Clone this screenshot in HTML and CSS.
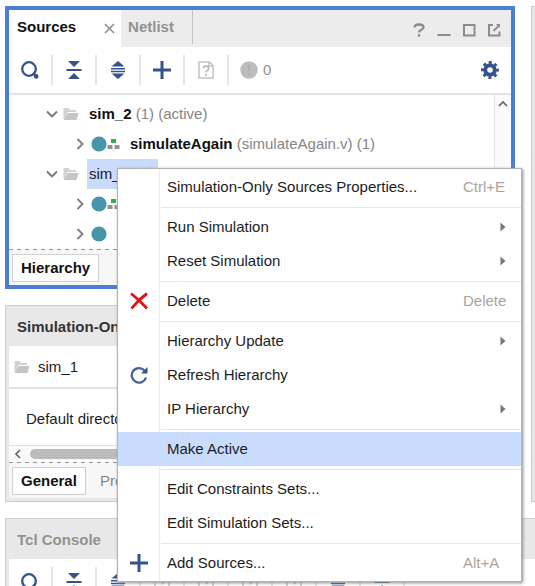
FILE: index.html
```html
<!DOCTYPE html>
<html lang="en">
<head>
<meta charset="utf-8">
<title>Sources</title>
<link rel="stylesheet" href="styles.css">
</head>
<body>
<svg class="defs" aria-hidden="true">
  <symbol id="search" viewBox="0 0 18 18"><circle cx="8" cy="8" r="6.8" fill="none" stroke="#34528c" stroke-width="2.3"/><path d="M12 12l3 3" stroke="#34528c" stroke-width="2.6"/><circle cx="15.2" cy="15.4" r="2.3" fill="#34528c"/></symbol>
  <symbol id="collapse" viewBox="0 0 18 18"><path d="M3 0h12l-6 6zM3 18h12l-6-6zM1.500 8h15v2h-15z" fill="#34528c"/></symbol>
  <symbol id="expand" viewBox="0 0 18 18"><path d="M2.500 5.500L9 0l6.500 5.500zM2.500 12.500L9 18l6.500-5.500zM2 7h14v1.500H2zM2 9.800h14v1.500H2z" fill="#34528c"/></symbol>
  <symbol id="plus" viewBox="0 0 18 18"><path d="M9 0v18M0 9h18" stroke="#34528c" stroke-width="3"/></symbol>
  <symbol id="doc" viewBox="0 0 18 18"><path d="M2 1h10.500L16 4.500V17H2zM12 1v4h4" fill="none" stroke="#c2c2c2" stroke-width="1.500"/><path d="M6.300 7.500q0-2.300 2.700-2.300t2.700 2.200q0 1.300-1.500 2Q9 10 9 11.600M9 13v2" fill="none" stroke="#b5b5b5" stroke-width="1.700"/></symbol>
  <symbol id="alert" viewBox="0 0 18 18"><circle cx="9" cy="9" r="8.700" fill="#bcbcbc"/><path d="M9 4v6M9 12v2" stroke="#b0b0b0" stroke-width="2"/></symbol>
  <symbol id="gear" viewBox="0 0 18 18"><circle cx="9" cy="9" r="4.800" fill="none" stroke="#34528c" stroke-width="4"/><circle cx="9" cy="9" r="7.500" fill="none" stroke="#34528c" stroke-width="2.800" stroke-dasharray="3 2.890" stroke-dashoffset="1.500"/></symbol>
  <symbol id="folder" viewBox="0 0 16 14"><path d="M0.500 12V1h5l1.500 2h6v2H4.500L1.500 12z" fill="#d2d2d2"/><path d="M4.500 6H15.500L13.500 13H0.800z" fill="#c5c5c5"/></symbol>
  <symbol id="down" viewBox="0 0 12 12"><path d="M1 3.500l5 5 5-5" fill="none" stroke="#777" stroke-width="1.900"/></symbol>
  <symbol id="right" viewBox="0 0 12 12"><path d="M3.500 1l5 5-5 5" fill="none" stroke="#808080" stroke-width="1.900"/></symbol>
  <symbol id="module" viewBox="0 0 30 16"><circle cx="8" cy="8" r="7.600" fill="#4795ab"/><path d="M20 3h5v4h-5z" fill="#35ad54"/><path d="M16.500 9h5v4h-5zM23.500 9h5v4h-5z" fill="#929292"/></symbol>
  <symbol id="circle" viewBox="0 0 30 16"><circle cx="8" cy="8" r="7.600" fill="#4795ab"/></symbol>
  <symbol id="sub" viewBox="0 0 6 10"><path d="M0.500 0.500L5.500 5l-5 4.500z" fill="#777"/></symbol>
</svg>

<main class="page">
  <section class="panel sources">
    <header class="tabs">
      <button class="tab active">Sources</button>
      <button class="close" aria-label="Close"><svg width="11" height="11" viewBox="0 0 11 11"><path d="M1 1l9 9M10 1l-9 9" stroke="#8c8c8c" stroke-width="1.500"/></svg></button>
      <button class="tab netlist">Netlist</button>
      <div class="window">
        <button aria-label="Help"><svg width="14" height="14" viewBox="0 0 14 14"><path d="M2.500 4.500Q2.500 1.500 7 1.500t4.500 2.700q0 1.600-2.500 2.800Q7 8 7 9.500M7 11.300v2.400" fill="none" stroke="#8c8c8c" stroke-width="2.300"/></svg></button>
        <button aria-label="Minimize"><svg width="14" height="14" viewBox="0 0 14 14"><path d="M0.500 12h13" stroke="#8c8c8c" stroke-width="2"/></svg></button>
        <button aria-label="Maximize"><svg width="14" height="14" viewBox="0 0 14 14"><path d="M2 2h10.500v10.500H2z" fill="none" stroke="#8c8c8c" stroke-width="2"/></svg></button>
        <button aria-label="Float"><svg width="14" height="14" viewBox="0 0 14 14"><path d="M6 2H2v10.500h10.500V8.500" fill="none" stroke="#8c8c8c" stroke-width="2"/><path d="M9 1h4v4z" fill="#8c8c8c"/><path d="M6.500 8l5-5" stroke="#8c8c8c" stroke-width="1.800"/></svg></button>
      </div>
    </header>
    <div class="toolbar">
      <button aria-label="Search"><svg><use href="#search"/></svg></button>
      <button aria-label="Collapse all"><svg><use href="#collapse"/></svg></button>
      <button aria-label="Expand all"><svg><use href="#expand"/></svg></button>
      <button aria-label="Add"><svg><use href="#plus"/></svg></button>
      <button aria-label="File help"><svg><use href="#doc"/></svg></button>
      <button class="count" aria-label="Messages"><svg><use href="#alert"/></svg>0</button>
      <button class="settings" aria-label="Settings"><svg><use href="#gear"/></svg></button>
    </div>
    <div class="body">
      <ul class="tree">
        <li><svg class="arrow"><use href="#down"/></svg><svg class="folder"><use href="#folder"/></svg><span><b>sim_2</b> (1) (active)</span></li>
        <li class="child"><svg class="arrow"><use href="#right"/></svg><svg class="module"><use href="#module"/></svg><span><b>simulateAgain</b> (simulateAgain.v) (1)</span></li>
        <li><svg class="arrow"><use href="#down"/></svg><svg class="folder"><use href="#folder"/></svg><span class="selected">sim_1</span></li>
        <li class="child"><svg class="arrow"><use href="#right"/></svg><svg class="module"><use href="#module"/></svg></li>
        <li class="child"><svg class="arrow"><use href="#right"/></svg><svg class="module"><use href="#circle"/></svg></li>
      </ul>
      <div class="vscroll"><svg width="10" height="6" viewBox="0 0 10 6"><path d="M1 5l4-4 4 4" fill="none" stroke="#666" stroke-width="1.700"/></svg></div>
    </div>
    <footer class="views"><button class="view on">Hierarchy</button></footer>
  </section>

  <section class="panel side" aria-label="Editor"></section>

  <section class="panel grey props">
    <h2 class="title">Simulation-Only</h2>
    <div class="object"><svg class="folder"><use href="#folder"/></svg>sim_1</div>
    <div class="field">Default directory</div>
    <div class="hscroll"><svg width="6" height="10" viewBox="0 0 6 10"><path d="M5 1L1 5l4 4" fill="none" stroke="#666" stroke-width="1.700"/></svg><i class="thumb"></i></div>
    <footer class="views"><button class="view on">General</button><button class="view">Properties</button></footer>
  </section>

  <section class="panel grey console">
    <h2 class="title muted">Tcl Console</h2>
    <div class="toolbar">
      <button aria-label="Search"><svg><use href="#search"/></svg></button>
      <button aria-label="Collapse all"><svg><use href="#collapse"/></svg></button>
      <button aria-label="Expand all"><svg><use href="#expand"/></svg></button>
      <button aria-label="Pause"><svg><use href="#doc"/></svg></button>
      <button aria-label="Copy"><svg><use href="#doc"/></svg></button>
      <button aria-label="Paste"><svg><use href="#doc"/></svg></button>
      <button aria-label="Clear"><svg><use href="#doc"/></svg></button>
      <button aria-label="Scroll"><svg><use href="#expand"/></svg></button>
      <button aria-label="Settings"><svg><use href="#collapse"/></svg></button>
    </div>
  </section>

  <nav class="menu" aria-label="Context menu">
    <button class="item"><span class="mark"></span>Simulation-Only Sources Properties...<kbd>Ctrl+E</kbd></button>
    <hr>
    <button class="item"><span class="mark"></span>Run Simulation<svg class="sub"><use href="#sub"/></svg></button>
    <button class="item"><span class="mark"></span>Reset Simulation<svg class="sub"><use href="#sub"/></svg></button>
    <hr>
    <button class="item"><span class="mark"><svg viewBox="0 0 18 18"><path d="M1 1.500q8 6 16 15M17 1.500Q8 8 1.500 16.500" fill="none" stroke="#e80c0c" stroke-width="2.800"/></svg></span>Delete<kbd>Delete</kbd></button>
    <hr>
    <button class="item"><span class="mark"></span>Hierarchy Update<svg class="sub"><use href="#sub"/></svg></button>
    <button class="item"><span class="mark"><svg viewBox="0 0 18 18"><path d="M14.500 4.500A7.300 7.300 0 1 0 16 11.500" fill="none" stroke="#45609a" stroke-width="2.300"/><path d="M17.500 1v6.500H11z" fill="#34528c"/></svg></span>Refresh Hierarchy</button>
    <button class="item"><span class="mark"></span>IP Hierarchy<svg class="sub"><use href="#sub"/></svg></button>
    <hr>
    <button class="item hover"><span class="mark"></span>Make Active</button>
    <hr>
    <button class="item"><span class="mark"></span>Edit Constraints Sets...</button>
    <button class="item"><span class="mark"></span>Edit Simulation Sets...</button>
    <hr>
    <button class="item"><span class="mark"><svg><use href="#plus"/></svg></span>Add Sources...<kbd>Alt+A</kbd></button>
  </nav>
</main>
</body>
</html>
```
FILE: styles.css
```css
* { box-sizing: border-box; }
body { margin: 0; background: #fff; color: #1c1c1c; font: 15px/20px "Liberation Sans", Arial, sans-serif; }
.defs { position: absolute; width: 0; height: 0; }
button { margin: 0; padding: 0; border: 0; background: none; color: inherit; font: inherit; white-space: nowrap; }
svg { display: block; flex: none; }

.page {
  position: relative;
  display: grid;
  grid-template-columns: minmax(0, 1fr) 4px;
  grid-template-rows: auto auto auto;
  align-content: start;
  column-gap: 16px;
  row-gap: 16px;
  height: 100vh;
  padding: 6px 0 0 5px;
  overflow: hidden;
}
.panel { background: #fff; min-width: 0; }
.sources { border: 4px solid #4b7fd1; }
.side { grid-column: 2; grid-row: 1 / span 2; background: #e6e6e6; border: 1px solid #ccc; border-right: 0; }
.grey { border: 1px solid #cecece; padding: 0 3px 3px; background: #e8e8e8; }
.props { grid-column: 1; }
.console { grid-column: 1 / -1; border-right: 0; padding-right: 0; }

.tabs { display: flex; height: 37px; background: #ececec; }
.tab { font-weight: bold; padding-bottom: 3px; }
.tab.active { padding-left: 8px; width: 92px; text-align: left; background: #fff; color: #111; }
.close { display: flex; align-items: center; width: 20px; padding-left: 3px; background: #fff; }
.netlist { width: 72px; height: 34px; padding: 0 11px 0 0; color: #929292; border-right: 1px solid #c4c4c4; }
.window { display: flex; align-items: center; gap: 11px; margin-left: auto; padding: 3px 10px 0 0; }

.toolbar { display: flex; align-items: center; height: 46px; padding-right: 12px; background: #fff; }
.toolbar button { display: flex; align-items: center; justify-content: center; width: 44px; height: 30px; border-right: 2px solid #e6e6e6; }
.toolbar svg { width: 18px; height: 18px; }
.toolbar .count { width: auto; padding-left: 11px; gap: 5px; border: 0; color: #929292; }
.toolbar .settings { width: 18px; margin-left: auto; border: 0; }

.body { display: flex; border-top: 2px solid #e3e3e3; }
.tree { flex: 1; min-width: 0; margin: 0; padding: 4px 0 0; list-style: none; color: #858585; }
.tree li { display: flex; align-items: center; height: 30px; padding-left: 37px; }
.tree .child { padding-left: 65px; }
.tree b { color: #111; }
.arrow { width: 12px; height: 12px; }
.folder { width: 16px; height: 14px; margin: 0 8px 0 5px; }
.tree span { padding: 0 2px; line-height: 30px; white-space: nowrap; }
.tree .selected { width: 71px; background: #cadcfd; color: #1c1c1c; }
.module { width: 30px; height: 16px; margin: 0 7px 0 5px; }
.vscroll { display: flex; justify-content: center; width: 17px; padding-top: 6px; border-left: 1px solid #e2e2e2; background: #fafafa; }

.views {
  display: flex;
  height: 36px;
  padding: 5px 3px 3px;
  background: repeating-linear-gradient(90deg, #999 0 4px, #f7f7f7 4px 8px) top / 100% 1px no-repeat #f7f7f7;
}
.view { height: 28px; padding: 0 14px; color: #858585; }
.view.on { padding: 0 8px; border: 1px solid #cfcfcf; background: #fff; color: #111; font-weight: bold; }

.title { height: 40px; margin: 0; padding-left: 8px; font-size: 15px; line-height: 41px; color: #333; white-space: nowrap; overflow: hidden; }
.title.muted { color: #929292; }
.object { display: flex; align-items: center; height: 43px; background: #fff; border-bottom: 2px solid #e3e3e3; }
.field { height: 56px; padding: 20px 0 0 17px; background: #fff; }
.hscroll { display: flex; align-items: center; gap: 9px; height: 17px; padding: 0 6px; border-top: 1px solid #e2e2e2; background: #fafafa; }
.thumb { flex: 1; height: 10px; border-radius: 5px; background: #bcbcbc; }

.menu {
  position: absolute;
  top: 168px;
  left: 117px;
  right: 13px;
  padding: 1px 0;
  border: 1px solid #b4b4b4;
  background: linear-gradient(90deg, #fff 41px, #ececec 41px, #ececec 42px, #fff 42px);
  box-shadow: 1px 1px 3px #888;
}
.item { display: flex; align-items: center; width: 100%; height: 34px; padding-right: 15px; text-align: left; }
.item.hover { background: #cadcfd; }
.mark { display: flex; flex: none; justify-content: flex-end; width: 49px; padding-right: 19px; }
.mark svg { width: 18px; height: 18px; }
.sub { width: 6px; height: 10px; margin-left: auto; }
kbd { width: 43px; margin-left: auto; font: inherit; color: #aaa59b; }
hr { height: 6px; margin: 0 0 0 43px; border: 0; background: linear-gradient(transparent 3px, #e6e6e6 3px, #e6e6e6 4px, transparent 4px); }
```
